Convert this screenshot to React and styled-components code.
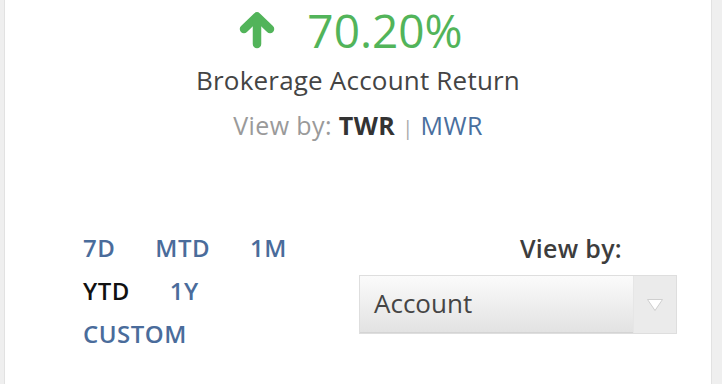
import React from "react";
import styled, { createGlobalStyle } from "styled-components";

const Global = createGlobalStyle`
  html, body { margin: 0; padding: 0; background: #efefef; }
  body { font-family: "Open Sans", "Lato", sans-serif; overflow: hidden; }
`;

const Page = styled.div`
  width: 722px;
  height: 384px;
  padding: 0 10px 0 4px;
  box-sizing: border-box;
`;

const Card = styled.div`
  height: 384px;
  background: #fff;
  border-left: 1px solid #e2e2e2;
  border-right: 1px solid #e2e2e2;
  box-sizing: border-box;
  display: flex;
  flex-direction: column;
`;

const Summary = styled.div`
  display: flex;
  flex-direction: column;
  align-items: center;
  padding-top: 5px;
`;

const ReturnRow = styled.div`
  display: flex;
  align-items: center;
  gap: 32px;
  color: #52b45a;
  margin-right: 14px;
`;

const ReturnValue = styled.span`
  font-size: 46px;
  font-weight: 400;
  line-height: 50px;
`;

const Label = styled.div`
  margin-top: 10px;
  font-size: 26px;
  letter-spacing: 0.2px;
  color: #444;
  line-height: 30px;
`;

const ViewLine = styled.div`
  margin-top: 15px;
  font-size: 25px;
  letter-spacing: 0.4px;
  line-height: 30px;
  color: #9a9a9a;
`;

const Strong = styled.span`
  color: #333;
  font-weight: 700;
`;

const Sep = styled.span`
  color: #aaa;
  margin: 0 7px;
  font-size: 20px;
`;

const Link = styled.a`
  color: #4a6f9e;
  text-decoration: none;
`;

const Controls = styled.div`
  display: flex;
  justify-content: space-between;
  padding: 0 34px 0 78px;
  margin-top: 92px;
`;

const Periods = styled.div`
  display: flex;
  flex-wrap: wrap;
  column-gap: 40px;
  row-gap: 17px;
  align-content: flex-start;
  width: 225px;
`;

const Period = styled.span`
  font-size: 24px;
  font-weight: 600;
  letter-spacing: 0.5px;
  line-height: 26px;
  color: ${(p) => (p.$active ? "#111" : "#4a6c9b")};
`;

const ViewBy = styled.div`
  display: flex;
  flex-direction: column;
  align-items: flex-end;
`;

const ViewByLabel = styled.div`
  font-size: 25px;
  font-weight: 600;
  letter-spacing: 0.3px;
  color: #3d3d3d;
  line-height: 26px;
  margin-right: 55px;
`;

const Select = styled.div`
  margin-top: 14px;
  width: 318px;
  height: 59px;
  box-sizing: border-box;
  border: 1px solid #dedede;
  display: flex;
  background: linear-gradient(#fbfbfb, #e2e2e2);
`;

const SelectText = styled.div`
  flex: 1;
  display: flex;
  align-items: center;
  padding: 0 0 3px 14px;
  font-size: 26px;
  color: #454545;
  border-bottom: 1px solid #d4d4d4;
`;

const SelectArrow = styled.div`
  width: 42px;
  background: #ebebeb;
  border-left: 1px solid #e6e6e6;
  display: flex;
  align-items: center;
  justify-content: center;
`;

const ArrowUp = () => (
  <svg width="36" height="38" viewBox="0 0 36 38">
    <g fill="none" stroke="#52b45a" strokeWidth="8.5" strokeLinecap="round" strokeLinejoin="round">
      <polyline points="5,18 18,5.5 31,18" />
      <line x1="18" y1="7" x2="18" y2="33" />
    </g>
  </svg>
);

const Caret = () => (
  <svg width="18" height="14" viewBox="0 0 18 14">
    <polygon points="1.5,1.5 16.5,1.5 9,12.5" fill="#fff" stroke="#cfcfcf" strokeWidth="1" strokeLinejoin="round" />
  </svg>
);

export default function App() {
  return (
    <>
      <Global />
      <Page>
        <Card>
          <Summary>
            <ReturnRow>
              <ArrowUp />
              <ReturnValue>70.20%</ReturnValue>
            </ReturnRow>
            <Label>Brokerage Account Return</Label>
            <ViewLine>
              View by: <Strong>TWR</Strong>
              <Sep>|</Sep>
              <Link>MWR</Link>
            </ViewLine>
          </Summary>
          <Controls>
            <Periods>
              <Period>7D</Period>
              <Period>MTD</Period>
              <Period>1M</Period>
              <Period $active>YTD</Period>
              <Period>1Y</Period>
              <Period>CUSTOM</Period>
            </Periods>
            <ViewBy>
              <ViewByLabel>View by:</ViewByLabel>
              <Select>
                <SelectText>Account</SelectText>
                <SelectArrow>
                  <Caret />
                </SelectArrow>
              </Select>
            </ViewBy>
          </Controls>
        </Card>
      </Page>
    </>
  );
}
